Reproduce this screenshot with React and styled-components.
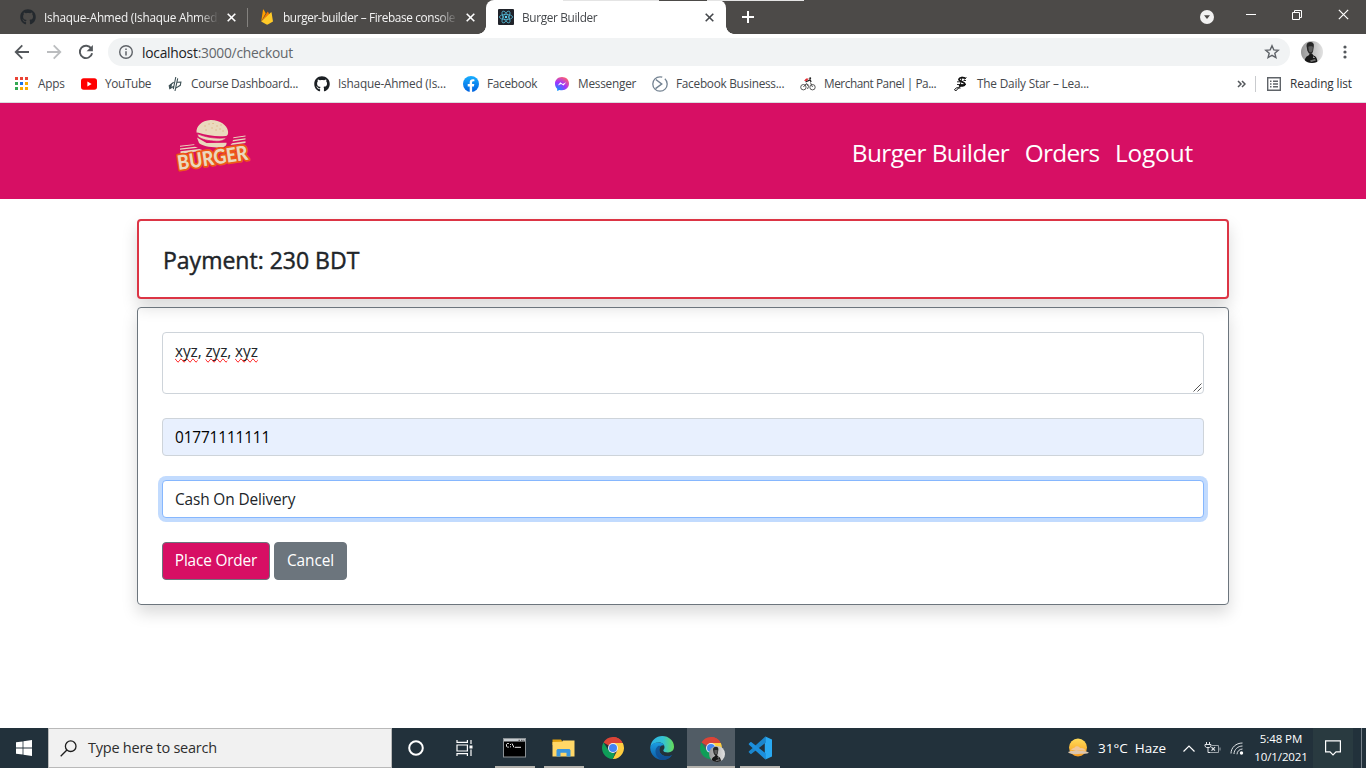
import React from "react";
import styled, { createGlobalStyle, css } from "styled-components";
import { FaGithub } from "react-icons/fa";

const PINK = "#d70f64";

const GlobalStyle = createGlobalStyle`
  *, *::before, *::after { box-sizing: border-box; }
  body { margin: 0; background: #fff; overflow: hidden; }
  svg { display: block; flex: none; }
`;

const Screen = styled.div`
  width: 1366px;
  height: 768px;
  display: flex;
  flex-direction: column;
  font-family: "Open Sans", "Noto Sans", sans-serif;
  color: #212529;
  overflow: hidden;
`;

const Label = styled.span`
  white-space: nowrap;
  font-size: ${(p) => p.$size || 11.8}px;
  letter-spacing: ${(p) => p.$track || 0}px;
  line-height: 1.3;
  ${(p) => p.$w && css`width: ${p.$w}px;`}
  flex: none;
`;

/* ---------- tab strip ---------- */
const TabStrip = styled.div`
  position: relative;
  height: 34px;
  background: #4c4a48;
  display: flex;
  padding-left: 8px;
  flex: none;
`;
const TopSliver = styled.i`
  position: absolute;
  top: 0;
  left: ${(p) => p.$left}px;
  width: ${(p) => p.$w}px;
  height: 1px;
  background: ${(p) => p.$color};
`;
const Tab = styled.div`
  position: relative;
  width: ${(p) => (p.$active ? 240 : 239)}px;
  height: 34px;
  padding: 0 8px 0 12px;
  display: flex;
  align-items: center;
  color: ${(p) => (p.$active ? "#45484c" : "#f4f4f4")};
  background: ${(p) => (p.$active ? "#fff" : "transparent")};
  border-radius: 8px 8px 0 0;
  ${(p) => p.$active && css`
    &::before, &::after {
      content: "";
      position: absolute;
      bottom: 0;
      width: 8px;
      height: 8px;
    }
    &::before { left: -8px; background: radial-gradient(circle at 0 0, transparent 7.5px, #fff 8px); }
    &::after { right: -8px; background: radial-gradient(circle at 100% 0, transparent 7.5px, #fff 8px); }
  `}
  ${(p) => p.$divider && css`
    &::after {
      content: "";
      position: absolute;
      right: -1px;
      top: 8px;
      height: 19px;
      width: 1px;
      background: #84827f;
    }
  `}
`;
const TabTitle = styled.span`
  width: 176px;
  margin: 0 7px 0 8px;
  padding-bottom: 1px;
  overflow: hidden;
  white-space: nowrap;
  font-size: 11.8px;
  letter-spacing: ${(p) => p.$track || 0}px;
  -webkit-mask-image: linear-gradient(90deg, #000 154px, transparent 175px);
`;
const NewTab = styled.div`
  width: 44px;
  display: flex;
  align-items: center;
  justify-content: center;
`;
const WindowControls = styled.div`
  margin-left: auto;
  display: flex;
`;
const ControlCell = styled.div`
  width: ${(p) => p.$w}px;
  height: 29px;
  display: flex;
  align-items: center;
  justify-content: center;
`;

/* ---------- toolbar ---------- */
const Toolbar = styled.div`
  height: 36px;
  display: flex;
  align-items: center;
  padding-left: 14px;
  flex: none;
`;
const NavIcons = styled.div`
  display: flex;
  gap: 16px;
  width: 94px;
`;
const Omnibox = styled.div`
  width: 1182px;
  height: 28px;
  border-radius: 14px;
  background: #f1f3f4;
  display: flex;
  align-items: center;
  padding: 0 10px;
  color: #63676b;
  b { font-weight: 400; color: #202124; }
`;
const Url = styled(Label)`
  margin-left: 8px;
  padding-top: 1px;
  flex: 1;
`;
const ProfileArea = styled.div`
  display: flex;
  align-items: center;
  gap: 20px;
  margin-left: 11px;
`;

/* ---------- bookmarks ---------- */
const Bookmarks = styled.div`
  height: 33px;
  border-bottom: 1px solid #dadce0;
  padding: 0 14px 4px;
  display: flex;
  align-items: center;
  gap: 16px;
  flex: none;
  color: #45484c;
`;
const Bookmark = styled.div`
  display: flex;
  align-items: center;
  gap: 8px;
`;
const BookmarkEnd = styled.div`
  margin-left: auto;
  display: flex;
  align-items: center;
  color: #303236;
`;
const ReadingList = styled.div`
  display: flex;
  align-items: center;
  gap: 9px;
`;
const Separator = styled.i`
  width: 1px;
  height: 16px;
  background: #c9cbce;
  margin: 0 11px 0 9px;
`;

/* ---------- page ---------- */
const Header = styled.header`
  height: 96px;
  background: ${PINK};
  display: flex;
  justify-content: space-between;
  padding: 0 173px 0 170px;
  flex: none;
`;
const Nav = styled.nav`
  display: flex;
  gap: 15.5px;
  padding-top: 34px;
  color: #fff;
`;
const Main = styled.main`
  flex: 1;
  padding: 20px 137px 0;
`;
const Card = styled.section`
  border: ${(p) => (p.$danger ? "2px solid #dc3545" : "1px solid #6c757d")};
  border-radius: 4px;
  box-shadow: 0 8px 16px rgba(0, 0, 0, 0.15);
  padding: 24px;
`;
const PaymentCard = styled(Card)`
  height: 80px;
  margin-bottom: 8px;
`;
const PaymentTitle = styled.h4`
  margin: 0;
  padding-top: 1px;
  font-size: 23px;
  line-height: 28px;
  font-weight: 400;
  -webkit-text-stroke: 0.45px currentColor;
`;
const FormCard = styled(Card)`
  height: 298px;
  display: flex;
  flex-direction: column;
  gap: 24px;
`;
const Field = styled.div`
  position: relative;
  height: ${(p) => p.$h || 38}px;
  flex: none;
  border: 1px solid ${(p) => (p.$focus ? "#86b7fe" : "#ced4da")};
  border-radius: 4px;
  padding: 6px 12px;
  line-height: 24px;
  background: ${(p) => (p.$filled ? "#e8f0fe" : "#fff")};
  color: ${(p) => (p.$filled ? "#000" : "#212529")};
  ${(p) => p.$focus && css`box-shadow: 0 0 0 4px rgba(13, 110, 253, 0.25);`}
`;
const Misspelt = styled.span`
  text-decoration: underline wavy #ff1c1c 1px;
  text-decoration-skip-ink: none;
  text-decoration-line: spelling-error;
`;
const Grip = styled.svg`
  position: absolute;
  right: 1px;
  bottom: 1px;
`;
const Actions = styled.div`
  display: flex;
  gap: 4px;
`;
const Button = styled.button`
  width: ${(p) => p.$w}px;
  height: 38px;
  padding: 1px 0 0;
  border: 1px solid #6c757d;
  border-radius: 4px;
  background: ${(p) => (p.$primary ? PINK : "#6c757d")};
  color: #fff;
  font-family: inherit;
`;

/* ---------- taskbar ---------- */
const Taskbar = styled.footer`
  height: 40px;
  background: #22313b;
  display: flex;
  color: #fff;
  flex: none;
`;
const Cell = styled.div`
  position: relative;
  width: ${(p) => p.$w || 48}px;
  height: 40px;
  display: flex;
  align-items: center;
  justify-content: center;
  background: ${(p) => (p.$active ? "#515c65" : "transparent")};
  ${(p) => p.$open && css`
    &::after {
      content: "";
      position: absolute;
      bottom: 0;
      left: ${p.$active ? 0 : 4}px;
      height: 2px;
      width: ${p.$active ? 48 : 40}px;
      background: #b5b3ae;
    }
  `}
`;
const AppCell = styled(Cell)`
  padding-right: 1px;
`;
const SearchBox = styled.div`
  width: 344px;
  height: 40px;
  border: 1px solid #b9b9b9;
  background: #f1f1f1;
  display: flex;
  align-items: center;
  padding-left: 11px;
  gap: 11px;
  color: #2e2e2e;
  span { padding-top: 1px; }
`;
const Apps = styled.div`
  display: flex;
  gap: 1px;
  margin-left: 3px;
`;
const Tray = styled.div`
  margin-left: auto;
  display: flex;
  align-items: center;
`;
const Weather = styled.div`
  display: flex;
  align-items: center;
  gap: 9px;
  margin-right: 15px;
  span { padding-top: 2px; }
`;
const TrayIcons = styled.div`
  display: flex;
  align-items: center;
  gap: 9px;
  margin-right: 11px;
`;
const Clock = styled.div`
  width: 52px;
  display: flex;
  flex-direction: column;
  align-items: center;
  gap: 3px;
  margin-right: 6px;
`;
const NotificationCell = styled(Cell)`
  background: #293a40;
`;
const ShowDesktop = styled.div`
  width: 5px;
  height: 40px;
  border-left: 1px solid #77818a;
  margin-left: 8px;
`;

/* ---------- drawings ---------- */
const Cross = ({ size = 9, color = "#fff", sw = 1.6 }) => (
  <svg width={size} height={size} viewBox="0 0 9 9" stroke={color} strokeWidth={sw}>
    <path d="M.7.7 8.3 8.3M8.3.7.7 8.3" />
  </svg>
);

const FirebaseIcon = () => (
  <svg width="16" height="16" viewBox="0 0 16 16">
    <path d="M2.2 12.4 4 .8c.1-.4.5-.4.7-.1l2 3.6z" fill="#ffa000" />
    <path d="m2.2 12.4 6.2-9.5c.2-.3.5-.3.7 0l1.2 2.6z" fill="#f57c00" />
    <path d="m2.2 12.4 9.6-8.9c.3-.3.8-.1.8.2l1.4 8.7-5.2 3.2c-.4.2-.9.2-1.3 0z" fill="#ffca28" />
  </svg>
);

const ReactIcon = () => (
  <svg width="16" height="16" viewBox="0 0 16 16">
    <rect width="16" height="16" rx="1" fill="#20232a" />
    <g fill="none" stroke="#53b8d4" strokeWidth=".8">
      <ellipse cx="8" cy="8" rx="6.6" ry="2.6" />
      <ellipse cx="8" cy="8" rx="6.6" ry="2.6" transform="rotate(60 8 8)" />
      <ellipse cx="8" cy="8" rx="6.6" ry="2.6" transform="rotate(120 8 8)" />
    </g>
    <circle cx="8" cy="8" r="1.2" fill="#61dafb" />
  </svg>
);

const BackArrow = ({ flip, color }) => (
  <svg width="16" height="16" viewBox="0 0 16 16" fill="none" stroke={color} strokeWidth="1.8" transform={flip ? "scale(-1 1)" : undefined}>
    <path d="M15 8H2.2M8.3 1.4 1.7 8l6.6 6.6" />
  </svg>
);

const ReloadIcon = () => (
  <svg width="16" height="16" viewBox="0 0 16 16" fill="none">
    <path d="M13.3 4.6A6.2 6.2 0 1 0 14.1 9.2" stroke="#54585c" strokeWidth="1.9" />
    <path d="M14.9 1v6.3H8.6z" fill="#54585c" />
  </svg>
);

const InfoIcon = () => (
  <svg width="16" height="16" viewBox="0 0 16 16" fill="none" stroke="#5f6368">
    <circle cx="8" cy="8" r="6.3" strokeWidth="1.4" />
    <path d="M8 7.2v4.2M8 4.5v1.5" strokeWidth="1.5" />
  </svg>
);

const StarIcon = () => (
  <svg width="16" height="16" viewBox="0 0 16 16" fill="none" stroke="#5f6368" strokeWidth="1.4">
    <path d="m8 1.800 1.800 4.100 4.400.4-3.400 2.900 1.100 4.400L8 11.300l-3.900 2.300 1.100-4.400L1.800 6.300l4.400-.4z" />
  </svg>
);

const Portrait = ({ size }) => (
  <svg width={size} height={size} viewBox="0 0 22 22">
    <defs>
      <clipPath id="round"><circle cx="11" cy="11" r="11" /></clipPath>
      <linearGradient id="wall" x2="1"><stop stopColor="#969696" /><stop offset="1" stopColor="#e2e2e2" /></linearGradient>
    </defs>
    <g clipPath="url(#round)">
      <rect width="22" height="22" fill="url(#wall)" />
      <path d="M3.500 22c0-4 1-6.500 4-7.500l1.500-2h2l1.500 2c2.500.5 4 3 4 7.500z" fill="#171717" />
      <path d="M5.500 5C5.500 2 7.200 1 9.300 1c2.700 0 3.900 1.700 3.500 4.500l-.7 4.500c-.5 2-1.300 3-2.600 3S7.300 12 6.300 9.500z" fill="#262626" />
      <path d="M7.300 5.800c1.700-.6 3.300-.6 4.600 0l-.4 4c-.5 1.700-2.900 2.200-3.700 0z" fill="#5c5c5c" />
      <path d="M9 19.500l5-1.500 1 1.500-5 1.500z" fill="#6f6f6f" />
      <path d="M12 16l1.500.5" stroke="#ddd" />
    </g>
  </svg>
);

const AppsGrid = () => {
  const colors = ["#ea4335", "#ea4335", "#ea4335", "#34a853", "#1a73e8", "#f9ab00", "#34a853", "#f9ab00", "#f9ab00"];
  return (
    <svg width="16" height="16" viewBox="0 0 16 16">
      {colors.map((c, i) => (
        <rect key={i} x={1 + (i % 3) * 5} y={1 + Math.floor(i / 3) * 5} width="3" height="3" fill={c} />
      ))}
    </svg>
  );
};

const YouTubeIcon = () => (
  <svg width="16" height="16" viewBox="0 0 16 16">
    <rect y="2.300" width="16" height="11.400" rx="2.700" fill="#f00" />
    <path d="M6.400 5.600v4.800L10.600 8z" fill="#fff" />
  </svg>
);

const CourseIcon = () => (
  <svg width="16" height="16" viewBox="0 0 16 16" fill="none" stroke="#3f5257" strokeWidth="1.100">
    <path d="M8.800 1 6.300 13.200M6.700 6.200 2.200 9.800l.6 2.900 4-2.500M10.700 2.300 8 15M10 6.300l3.900-.3-.6 3.300-4.500 2.800" />
    <path d="M2.200 9.800l.6 2.900 1.800-1.100.4-4z" fill="#3f5257" stroke="none" />
  </svg>
);

const FacebookIcon = () => (
  <svg width="16" height="16" viewBox="0 0 16 16">
    <defs><linearGradient id="fb" x2="0" y2="1"><stop stopColor="#19afff" /><stop offset="1" stopColor="#0062e0" /></linearGradient></defs>
    <circle cx="8" cy="8" r="8" fill="url(#fb)" />
    <path d="M6.700 16v-5.600H4.700V8h2V6.300c0-2 1.200-3.100 3-3.100.9 0 1.700.2 1.700.2v1.900h-1c-1 0-1.300.6-1.300 1.200V8h2.200l-.4 2.400H9.100V16z" fill="#fff" />
  </svg>
);

const MessengerIcon = () => (
  <svg width="16" height="16" viewBox="0 0 16 16">
    <defs>
      <radialGradient id="msg" cx=".19" cy=".99" r="1.100">
        <stop stopColor="#09f" /><stop offset=".55" stopColor="#a033ff" /><stop offset="1" stopColor="#ff6070" />
      </radialGradient>
    </defs>
    <path d="M8 1C3.900 1 1 3.900 1 7.700c0 2 .8 3.800 2.200 5v2.200l2.200-1c.8.300 1.700.4 2.600.4 4.100 0 7-2.900 7-6.700S12.100 1 8 1z" fill="url(#msg)" />
    <path d="m3.800 9.600 2.500-3.300 2.500 1.700 3.300-1.800-2.500 3.400-2.500-1.700z" fill="#fff" />
  </svg>
);

const BusinessIcon = () => (
  <svg width="16" height="16" viewBox="0 0 16 16" fill="none" stroke="#748392" strokeWidth="1.300">
    <circle cx="8" cy="8" r="7.200" strokeDasharray="36 3 7" />
    <path d="M3.800 3.500 9.700 8l-6.200 4.700" strokeWidth="1.500" />
  </svg>
);

const BikeIcon = () => (
  <svg width="16" height="16" viewBox="0 0 16 16" fill="none" stroke="#444" strokeWidth=".9">
    <circle cx="3.400" cy="11.200" r="2.700" />
    <circle cx="12.500" cy="11.200" r="2.700" />
    <path d="m3.400 11 3-3.500 2.500 2M10.400 6.500l2.100 4.500M7.500 13l1-2.500L6.500 8" />
    <path d="M5.500 6 10 3.800l1.200 2" stroke="#222" strokeWidth="1.300" />
    <path d="M4 4.800 6.200 2.400h2.600L6.600 5z" fill="#e3262e" stroke="none" />
    <circle cx="10.200" cy="2.300" r="1" fill="#222" stroke="none" />
  </svg>
);

const DailyStarIcon = () => (
  <svg width="16" height="16" viewBox="0 0 16 16" fill="none" stroke="#111">
    <path d="M12.500 2.300C10.500 1.300 6.600 1.300 5.900 3.300c-.5 2 6.300 2.700 6 5-.2 1.800-4 2-6 1.200" strokeWidth="1.700" />
    <path d="M4 5.800h3.500M10.500 4.500H13M9 .8 6.800 11M13.500 1.500l-2 2M4 8.500h9" strokeWidth=".9" />
    <path d="M7 10.500 2.700 15l-1.200-1.500 2.300-1.800 3.700.4" strokeWidth="1" />
  </svg>
);

const ReadingListIcon = () => (
  <svg width="14" height="14" viewBox="0 0 14 14" fill="none" stroke="#5f6368" strokeWidth="1.400">
    <path d="M.7.7h12.600v12.600H.7zM3 4.200h1.500M6 4.200h5M3 7h1.500M6 7h5M3 9.800h1.500M6 9.800h5" />
  </svg>
);

const BurgerLogo = () => (
  <svg width="90" height="80" viewBox="170 103 90 80">
    <g fill="#ead9bd">
      <path d="M196.500 132.500c-.5-6 5-12 14-12.500 9-.3 16.500 5 17.500 11 .5 3-.5 5-2.500 5-9 .8-18-.5-27-3.300z" />
      <path d="M197.500 133.800c8 3.500 18 5.200 29 4-3 3-6.500 3.700-10 3.400-8-.2-15-1.700-18.500-4.700z" stroke={PINK} strokeWidth=".7" />
      <path d="M197 137.500l9.500 5.500 20-.3c.5 2.500-2 5-6.500 4.600-9 .5-18-1.500-21-4.300z" />
      <path d="m180 145.800 14-1.600.7.900-14.700 1.700zM180 148.500l15-1.700 3 1-18 2zM180.500 151.200l19-2.200 4 1.500-23 3.200zM233.500 137.300l12-1.800v.9l-12.500 1.800zM233 140l12.500-1.800v1.200L232.500 141.500zM232 143.200l13.500-2v1.700L230.500 145z" />
    </g>
    <path d="M205 126h.1M209 124h.1M213 123.500h.1M217 126h.1M221 125h.1M212 128h.1M216 130h.1M220 129h.1M206 130h.1M223 131h.1" stroke="#d89d62" strokeWidth="1" strokeLinecap="round" />
    <text
      transform="translate(178.500 170) rotate(-8.500)"
      fontFamily="Lato, sans-serif"
      fontWeight="900"
      fontSize="20"
      textLength="71"
      lengthAdjust="spacingAndGlyphs"
      fill="#ead9bd"
      stroke="#ee5a17"
      strokeWidth="3.600"
      strokeLinejoin="round"
      paintOrder="stroke"
    >
      BURGER
    </text>
  </svg>
);

const ChromeLogo = () => (
  <svg width="22" height="22" viewBox="0 0 22 22">
    <path d="M11 11 1.470 5.500A11 11 0 0 1 20.530 5.500z" fill="#db4437" />
    <path d="M11 11V0A11 11 0 0 1 20.530 5.500H11z" fill="#db4437" />
    <path d="M11 6h9.800A11 11 0 0 1 10.800 22L15.300 13.500z" fill="#ffcd40" />
    <path d="M1.470 5.500 6.700 13.500 11 16l2 .2L10.800 22A11 11 0 0 1 1.470 5.500z" fill="#0f9d58" />
    <circle cx="11" cy="11" r="5" fill="#f1f1f1" />
    <circle cx="11" cy="11" r="4" fill="#4285f4" />
  </svg>
);

const ChromeProfile = styled.div`
  position: relative;
  width: 22px;
  height: 22px;
  > svg:last-child { position: absolute; left: 9px; top: 9px; }
`;

const EdgeLogo = () => (
  <svg width="24" height="24" viewBox="0 0 24 24">
    <defs>
      <linearGradient id="eg" x2="1"><stop stopColor="#2bb4e8" /><stop offset=".55" stopColor="#34c2d2" /><stop offset="1" stopColor="#66dd57" /></linearGradient>
      <linearGradient id="eb" x2="0" y2="1"><stop stopColor="#1b9de2" /><stop offset="1" stopColor="#0c59a4" /></linearGradient>
    </defs>
    <path d="M.5 10.500C1.300 4.500 6.200 0 12.200 0 19 0 24 5 24 10.700c0 3.600-2.800 5.700-6 5.700-3 0-4.700-1-4.700-2 0-.8 1.200-1.200 1.200-3.200C14.500 8.500 12 6.600 8.800 6.600 4.800 6.600 1.700 8.500.5 10.500z" fill="url(#eg)" />
    <path d="M.2 12C0 8.700 4.200 6.600 8.400 6.600c3 0 5 1.300 5.800 3-1.700-.8-4.900.3-4.900 4.200 0 4 4 6.700 8 6.500 2 0 3.800-.9 4.700-1.400C20 22.200 16.400 24 12.400 24 5.800 24 .5 18.700.2 12z" fill="url(#eb)" />
    <path d="M8.500 9.800c-2.300 1.500-3.200 3.700-3 6.200.3 4 3.500 7.600 7 8 4.300 0 7.500-2 9.500-5.100-6 3-12.700.3-12.700-5 0-1.900.8-3.400 2-4.200z" fill="#114a8b" opacity=".75" />
  </svg>
);

const VsCodeLogo = () => (
  <svg width="24" height="24" viewBox="0 0 24 24">
    <path d="m17.400.5 6.600 3v17l-6.600 3-.6-5.500V6z" fill="#29a9f2" />
    <path d="M17.400.5 1 15.300c-.4.4-.4.9 0 1.200l1.300 1.200c.4.300.8.3 1.200 0L18 6.400z" fill="#1b86cc" />
    <path d="M17.400 23.500 1 8.700c-.4-.4-.4-.9 0-1.200l1.300-1.200c.4-.3.8-.3 1.200 0L18 17.600z" fill="#1c8fdc" />
  </svg>
);

const CmdIcon = () => (
  <svg width="23" height="20" viewBox="0 0 23 20">
    <rect x=".5" y=".5" width="22" height="18.500" fill="#000" stroke="#8c9296" />
    <path d="M1 1h21v2.500H1z" fill="#c8cdd1" />
    <path d="M15.500 2.300h1.500M18 2.300h1.500M20.300 2.300h1" stroke="#444" />
    <path d="M5.800 5.500H4.300l-.8.8v2l.8.8h1.500M7.500 6v1M7.500 8.300v1M9 5.500l2 4M12 9.300h6" fill="none" stroke="#e8e8e8" />
  </svg>
);

const FolderIcon = () => (
  <svg width="23" height="20" viewBox="0 0 23 20">
    <path d="M.5 1.500h8.500l1 1.500v4H.5z" fill="#e0a00e" />
    <path d="M.5 4 10 3.700l1-1.200h11.500V18.500H.5z" fill="#ffd767" />
    <path d="M4.500 18.500v-6.200l1-1.300h12l1 1.300v6.200h-4v-3.800h-6v3.800z" fill="#3a96dd" />
  </svg>
);

const TaskViewIcon = () => (
  <svg width="17" height="16" viewBox="0 0 17 16" fill="none" stroke="#fff" strokeWidth="1.200">
    <path d="M1 0v2.400h10.400V0M1 16v-2.400h10.400V16M1 5h10.400v6H1zM15 0v4M15 9.500V16" />
    <path d="M13.500 5.500h3v3h-3z" fill="#fff" stroke="none" />
  </svg>
);

const WeatherIcon = () => (
  <svg width="21" height="20" viewBox="0 0 21 20">
    <defs><linearGradient id="sun" x2="0" y2="1"><stop stopColor="#ffdc5a" /><stop offset="1" stopColor="#f79a1c" /></linearGradient></defs>
    <circle cx="10" cy="9.500" r="9" fill="url(#sun)" />
    <path d="M3 12c1-2 4-2 4.500-3.500C10 7.500 12 9 12 10.200c3-.5 5 .8 5.500 2.600z" fill="#f1c79a" />
    <path d="M0 14.300c1.500-1.600 5-1.200 6-1.600 3-1.600 5 .6 7 .4 3-.6 7 .5 8 1.700-2 1.200-6 .8-8 1-4 .4-10 1-13-1.500z" fill="#ddc6ad" />
  </svg>
);

const bookmarks = [
  { icon: <AppsGrid />, label: "Apps", w: 27, track: -0.24 },
  { icon: <YouTubeIcon />, label: "YouTube", w: 46, track: -0.35 },
  { icon: <CourseIcon />, label: "Course Dashboard...", w: 107, track: -0.26 },
  { icon: <FaGithub size={16} color="#1b1f23" />, label: "Ishaque-Ahmed (Is...", w: 109, track: -0.2 },
  { icon: <FacebookIcon />, label: "Facebook", w: 51, track: -0.3 },
  { icon: <MessengerIcon />, label: "Messenger", w: 58, track: -0.22 },
  { icon: <BusinessIcon />, label: "Facebook Business...", w: 108, track: -0.26 },
  { icon: <BikeIcon />, label: "Merchant Panel | Pa...", w: 113, track: -0.45 },
  { icon: <DailyStarIcon />, label: "The Daily Star – Lea...", w: 112, track: -0.18 },
];

export default function App() {
  return (
    <Screen>
      <GlobalStyle />
      <TabStrip>
        <Tab $divider>
          <FaGithub size={16} color="#24292e" />
          <TabTitle $track={-0.24}>Ishaque-Ahmed (Ishaque Ahmed)</TabTitle>
          <Cross />
        </Tab>
        <Tab>
          <FirebaseIcon />
          <TabTitle $track={-0.36}>burger-builder – Firebase console</TabTitle>
          <Cross />
        </Tab>
        <Tab $active>
          <ReactIcon />
          <TabTitle $track={-0.34}>Burger Builder</TabTitle>
          <Cross color="#45484c" />
        </Tab>
        <NewTab>
          <svg width="12" height="12" viewBox="0 0 12 12" stroke="#fff" strokeWidth="2"><path d="M6 0v12M0 6h12" /></svg>
        </NewTab>
        <WindowControls>
          <ControlCell $w={42}>
            <svg width="14" height="24" viewBox="0 -5 14 24">
              <circle cx="7" cy="9" r="7" fill="#f1f1f1" />
              <path d="M4 7.200h6L7 11z" fill="#4c4a48" />
            </svg>
          </ControlCell>
          <ControlCell $w={46}>
            <svg width="10" height="10" viewBox="0 0 10 10"><path d="M0 4.500h10" stroke="#fff" /></svg>
          </ControlCell>
          <ControlCell $w={46}>
            <svg width="10" height="10" viewBox="0 0 10 10" fill="none" stroke="#fff"><path d="M.5 2.500h7v7h-7zM2.500 2.500v-2h7v7h-2" /></svg>
          </ControlCell>
          <ControlCell $w={46}><Cross size={11} sw={1} /></ControlCell>
        </WindowControls>
        <TopSliver $left={563} $w={96} $color="#e4e4e4" />
        <TopSliver $left={659} $w={48} $color="#4c4a48" />
        <TopSliver $left={707} $w={97} $color="#e4e4e4" />
      </TabStrip>

      <Toolbar>
        <NavIcons>
          <BackArrow color="#54585c" />
          <BackArrow flip color="#bbbdbf" />
          <ReloadIcon />
        </NavIcons>
        <Omnibox>
          <InfoIcon />
          <Url $size={13.8} $track={-0.24}><b>localhost</b>:3000/checkout</Url>
          <StarIcon />
        </Omnibox>
        <ProfileArea>
          <Portrait size={22} />
          <svg width="4" height="14" viewBox="0 0 4 14" fill="#54585c">
            <circle cx="2" cy="2" r="1.600" /><circle cx="2" cy="7" r="1.600" /><circle cx="2" cy="12" r="1.600" />
          </svg>
        </ProfileArea>
      </Toolbar>

      <Bookmarks>
        {bookmarks.map((b) => (
          <Bookmark key={b.label}>
            {b.icon}
            <Label $w={b.w} $track={b.track}>{b.label}</Label>
          </Bookmark>
        ))}
        <BookmarkEnd>
          <svg width="9" height="8" viewBox="0 0 9 8" fill="none" stroke="#54585c" strokeWidth="1.500"><path d="M1 1l3 3-3 3M5 1l3 3-3 3" /></svg>
          <Separator />
          <ReadingList>
            <ReadingListIcon />
            <Label $w={62} $track={-0.1}>Reading list</Label>
          </ReadingList>
        </BookmarkEnd>
      </Bookmarks>

      <Header>
        <BurgerLogo />
        <Nav>
          <Label $size={24.4} $track={-0.57}>Burger Builder</Label>
          <Label $size={24.4} $track={-0.75}>Orders</Label>
          <Label $size={24.4} $track={-0.15}>Logout</Label>
        </Nav>
      </Header>

      <Main>
        <PaymentCard $danger>
          <PaymentTitle>Payment: 230 BDT</PaymentTitle>
        </PaymentCard>
        <FormCard>
          <Field $h={62}>
            <Label $size={15.4} $track={-0.1}><Misspelt>xyz</Misspelt>, <Misspelt>zyz</Misspelt>, <Misspelt>xyz</Misspelt></Label>
            <Grip width="9" height="9" viewBox="0 0 9 9" stroke="#555"><path d="M.5 8.500l8-8M4.500 8.500l4-4" /></Grip>
          </Field>
          <Field $filled><Label $size={15.4} $track={-0.15}>01771111111</Label></Field>
          <Field $focus><Label $size={15.4} $track={-0.13}>Cash On Delivery</Label></Field>
          <Actions>
            <Button $w={108} $primary><Label $size={15.4} $track={-0.18}>Place Order</Label></Button>
            <Button $w={73}><Label $size={15.4} $track={-0.1}>Cancel</Label></Button>
          </Actions>
        </FormCard>
      </Main>

      <Taskbar>
        <Cell>
          <svg width="16" height="16" viewBox="0 0 16 16" fill="#fff">
            <path d="M0 2.300 6.600 1.400v6.200H0zM7.400 1.300 16 0v7.600H7.400zM0 8.400h6.600v6.200L0 13.700zM7.400 8.400H16V16l-8.600-1.300z" />
          </svg>
        </Cell>
        <SearchBox>
          <svg width="17" height="17" viewBox="0 0 17 17" fill="none" stroke="#1e1e1e" strokeWidth="1.300">
            <circle cx="10.700" cy="6.200" r="5.300" /><path d="M6.900 10 .7 16.300" />
          </svg>
          <Label $size={14.500} $track={-0.24}>Type here to search</Label>
        </SearchBox>
        <Cell>
          <svg width="16" height="16" viewBox="0 0 16 16" fill="none" stroke="#fff" strokeWidth="2"><circle cx="8" cy="8" r="6.800" /></svg>
        </Cell>
        <Cell><TaskViewIcon /></Cell>
        <Apps>
          <AppCell $open><CmdIcon /></AppCell>
          <AppCell $open><FolderIcon /></AppCell>
          <AppCell><ChromeLogo /></AppCell>
          <AppCell><EdgeLogo /></AppCell>
          <AppCell $open $active><ChromeProfile><ChromeLogo /><Portrait size={16} /></ChromeProfile></AppCell>
          <AppCell $open><VsCodeLogo /></AppCell>
        </Apps>
        <Tray>
          <Weather>
            <WeatherIcon />
            <Label $size={13.500} $w={70}>31°C&nbsp; Haze</Label>
          </Weather>
          <TrayIcons>
            <svg width="12" height="7" viewBox="0 0 12 7" fill="none" stroke="#fff" strokeWidth="1.200"><path d="M.5 6.500 6 1l5.500 5.500" /></svg>
            <svg width="17" height="12" viewBox="0 0 17 12" fill="none" stroke="#e4e7ea">
              <path d="M2.500 0v2M5.500 0v2M1 2.500h6v1.800L5.500 5.500h-3L1 4.300zM4 5.500v5M4 10.500h3" />
              <path d="M8 3.500h6.500v7H6M16 5.500v3" stroke="#9aa2a8" />
              <path d="M7.500 5.200l3.500 3.500M11 5.200 7.500 8.700" strokeWidth="1.200" />
            </svg>
            <svg width="14" height="13" viewBox="0 0 14 13" fill="none" stroke="#dfe3e6">
              <path d="M1 11.500C1 5.500 6 1 12.500 1M4 12c0-4.500 4-8 8.500-8M7 12.300C7 9.500 9.500 7 12.500 7" />
              <circle cx="11.500" cy="11" r="1.700" fill="#fff" stroke="none" />
            </svg>
          </TrayIcons>
          <Clock>
            <Label $size={11.500} $track={-0.1}>5:48 PM</Label>
            <Label $size={11.500} $track={-0.1}>10/1/2021</Label>
          </Clock>
          <NotificationCell $w={40}>
            <svg width="16" height="16" viewBox="0 0 16 16" fill="none" stroke="#fff" strokeWidth="1.200"><path d="M.6.800h14.800v11H11L8 14.800l-3-3H.6z" /></svg>
          </NotificationCell>
          <ShowDesktop />
        </Tray>
      </Taskbar>
    </Screen>
  );
}
